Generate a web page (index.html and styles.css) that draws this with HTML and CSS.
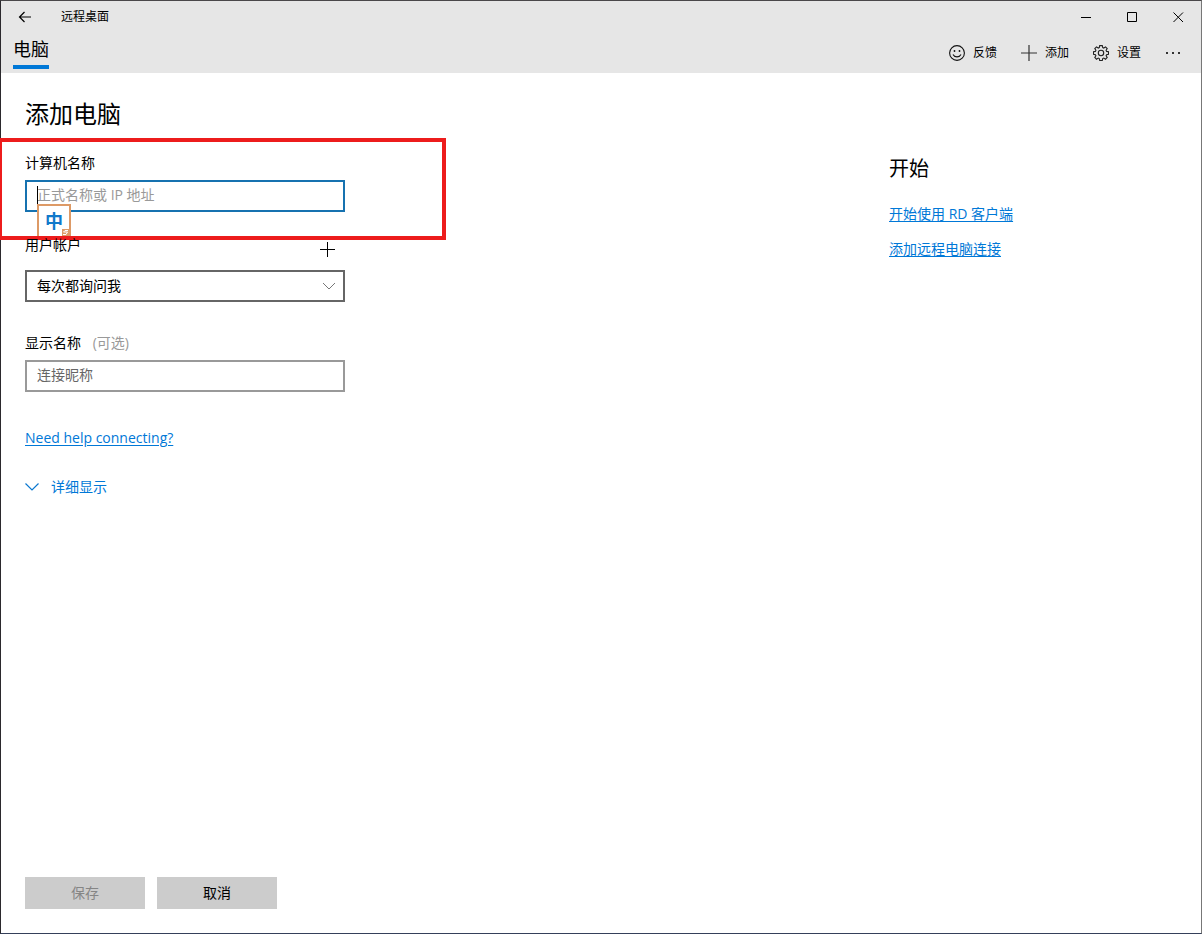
FILE: index.html
```html
<!DOCTYPE html>
<html lang="zh-CN">
<head>
<meta charset="utf-8">
<meta name="viewport" content="width=device-width, initial-scale=1">
<title>远程桌面</title>
<link rel="stylesheet" href="styles.css">
</head>
<body>
<div class="window">
  <header class="header">
    <div class="titlebar">
      <button class="back" type="button" aria-label="返回">
        <svg width="14" height="12" viewBox="0 0 14 12"><path d="M13 6H1.5M6.5 1L1.5 6l5 5" fill="none" stroke="#000" stroke-width="1.2"/></svg>
      </button>
      <span class="app-name">远程桌面</span>
      <div class="window-controls">
        <button type="button" aria-label="最小化"><svg width="11" height="11" viewBox="0 0 11 11"><path d="M0 5.5h10" stroke="#000"/></svg></button>
        <button type="button" aria-label="最大化"><svg width="11" height="11" viewBox="0 0 11 11"><path d="M.5.5h9v9h-9z" fill="none" stroke="#000"/></svg></button>
        <button type="button" aria-label="关闭"><svg width="11" height="11" viewBox="0 0 11 11"><path d="M.5.5l9.500 9.500M10 .5L.5 10" stroke="#000"/></svg></button>
      </div>
    </div>
    <div class="commandbar">
      <nav><a class="tab" href="#computers">电脑</a></nav>
      <div class="commands">
        <button class="command" type="button">
          <svg width="16" height="16" viewBox="0 0 16 16"><circle cx="8" cy="8" r="7.4" fill="none" stroke="#111" stroke-width="1.1"/><circle cx="5.5" cy="6" r=".9" fill="#111"/><circle cx="10.5" cy="6" r=".9" fill="#111"/><path d="M4 9.5c1.600 3.200 6.400 3.200 8 0" fill="none" stroke="#111" stroke-width="1.1"/></svg>
          反馈
        </button>
        <button class="command" type="button">
          <svg width="16" height="16" viewBox="0 0 16 16"><path d="M8 0v16M0 8h16" stroke="#333" stroke-width="1.2"/></svg>
          添加
        </button>
        <button class="command" type="button">
          <svg width="16" height="16" viewBox="0 0 16 16"><g fill="none" stroke="#222" stroke-width="1.1"><path d="M6.700.6h2.600l.4 1.900 1.100.5 1.700-1.100 1.700 1.700-1.100 1.700.5 1.100 1.900.4v2.500l-1.900.4-.5 1.100 1.100 1.700-1.700 1.700-1.700-1.100-1.100.5-.4 1.900H6.700l-.4-1.900-1.100-.5-1.700 1.100-1.700-1.700 1.100-1.700-.5-1.100-1.900-.4V6.800l1.900-.4.5-1.100-1.100-1.700 1.700-1.700L5.200 3l1.100-.5z"/><circle cx="8" cy="8" r="2.700"/></g></svg>
          设置
        </button>
        <button class="more" type="button" aria-label="更多"><svg width="16" height="4" viewBox="0 0 16 4"><path d="M1 1h2v2H1zM7 1h2v2H7zM13 1h2v2h-2z" fill="#333"/></svg></button>
      </div>
    </div>
  </header>
  <main class="main">
    <form class="form">
      <h1>添加电脑</h1>
      <div class="field name-field">
        <label for="pc">计算机名称</label>
        <input class="box focused" id="pc" type="text" placeholder="正式名称或 IP 地址">
        <span class="caret"></span>
        <span class="ime">中<svg class="ime-mark" width="7" height="7" viewBox="0 0 7 7"><path d="M0 0h7v7H0z" fill="#dd9a66"/><path d="M6 1.500H3L1.500 3h4L4 5.500H1" fill="none" stroke="#fff"/></svg></span>
        <span class="highlight"></span>
      </div>
      <div class="field account-field">
        <div class="label-row">
          <label for="account">用户帐户</label>
          <button class="add-account" type="button" aria-label="添加用户帐户"><svg width="15" height="15" viewBox="0 0 15 15"><path d="M7.500 0v15M0 7.500h15" stroke="#000"/></svg></button>
        </div>
        <div class="select-wrap">
          <select class="box" id="account"><option>每次都询问我</option></select>
          <svg class="chevron" width="14" height="8" viewBox="0 0 14 8"><path d="M1 1l6 6 6-6" fill="none" stroke="#777"/></svg>
        </div>
      </div>
      <div class="field">
        <label for="display">显示名称 <span class="optional">(可选)</span></label>
        <input class="box" id="display" type="text" placeholder="连接昵称">
      </div>
      <a class="link" href="#help">Need help connecting?</a>
      <button class="details" type="button"><svg width="14" height="8" viewBox="0 0 14 8"><path d="M.5.500l6.500 6.500L13.500.5" fill="none" stroke="#0b78d0" stroke-width="1.2"/></svg>详细显示</button>
      <div class="actions">
        <button type="submit" disabled>保存</button>
        <button type="button">取消</button>
      </div>
    </form>
    <aside class="aside">
      <h2>开始</h2>
      <a class="link" href="#start">开始使用 RD 客户端</a>
      <a class="link" href="#remote">添加远程电脑连接</a>
    </aside>
  </main>
</div>
</body>
</html>
```
FILE: styles.css
```css
* { box-sizing: border-box; }
body {
  margin: 0;
  font: 14px/20px "Open Sans", "Noto Sans CJK SC", sans-serif;
  color: #000;
}
button, input, select { font: inherit; color: inherit; }
button { border: 0; padding: 0; background: none; }
svg { display: block; flex: none; }
.window {
  display: flex;
  flex-direction: column;
  min-height: 100vh;
  border: 1px solid;
  border-color: #4a484a #777 #35405a #2b292d;
  background: #fff;
}
.header { background: #e6e6e6; }
.titlebar { display: flex; align-items: center; height: 32px; font-size: 12px; }
.back { display: flex; justify-content: center; width: 48px; }
.app-name { margin-left: 12px; }
.window-controls { display: flex; margin-left: auto; }
.window-controls button { display: flex; align-items: center; justify-content: center; width: 46px; height: 32px; }
.commandbar { display: flex; justify-content: space-between; height: 40px; padding-left: 12px; }
.tab {
  display: block;
  height: 36px;
  border-bottom: 4px solid #0078d7;
  font-size: 18px;
  line-height: 32px;
  color: #000;
  text-decoration: none;
}
.commands { display: flex; align-items: center; gap: 24px; padding-right: 20px; font-size: 12px; }
.command { display: flex; align-items: center; gap: 8px; }
.main { display: flex; flex: 1; }
.form { display: flex; flex: 1; flex-direction: column; align-items: flex-start; padding: 25px 24px 24px; }
h1, h2 { margin: 0; font-weight: 400; }
h1 { font-size: 24px; line-height: 32px; }
.field { position: relative; display: flex; flex-direction: column; gap: 7px; width: 320px; max-width: 100%; margin-top: 31px; }
.name-field { margin-top: 23px; }
.box {
  width: 100%;
  height: 32px;
  padding: 0 10px;
  border: 2px solid #999;
  border-radius: 0;
  outline: 0;
  background: #fff;
}
input.box { padding-bottom: 3px; }
.box::placeholder { color: #666; opacity: 1; }
.box.focused { border-color: #1672b0; }
.box.focused::placeholder { color: #999; }
.caret { position: absolute; left: 12px; bottom: 6px; width: 1px; height: 20px; background: #000; }
.ime {
  position: absolute;
  left: 12px;
  top: 51px;
  width: 34px;
  height: 34px;
  border: 2px solid #dd9a66;
  background: #fff;
  color: #1079cb;
  font-size: 18px;
  font-weight: 700;
  line-height: 30px;
  text-align: center;
}
.ime-mark { position: absolute; right: 0; bottom: 0; }
.highlight { position: absolute; left: -27px; top: -15px; width: 448px; height: 102px; border: 4px solid #ed1c1c; pointer-events: none; }
.label-row { display: flex; justify-content: space-between; align-items: flex-start; }
.add-account { padding: 7px 10px 0 0; }
.account-field { margin-top: 23px; gap: 13px; }
.select-wrap { position: relative; }
select.box { appearance: none; display: block; border-color: #666; }
.chevron { position: absolute; right: 9px; top: 12px; pointer-events: none; }
.optional { margin-left: 8px; color: #999; }
.link { color: #0078d7; text-underline-offset: 2px; }
.form > .link { margin-top: 36px; }
.details { display: flex; align-items: center; gap: 12px; margin-top: 29px; color: #0078d7; }
.actions { display: flex; gap: 12px; margin-top: auto; }
.actions button { width: 120px; height: 32px; background: #ccc; }
.actions button:disabled { color: #858585; }
.aside { display: flex; flex-direction: column; align-items: flex-start; width: 312px; padding: 80px 24px 24px 0; }
h2 { font-size: 20px; line-height: 32px; margin-bottom: 19px; }
.aside .link { margin-bottom: 15px; }
```
